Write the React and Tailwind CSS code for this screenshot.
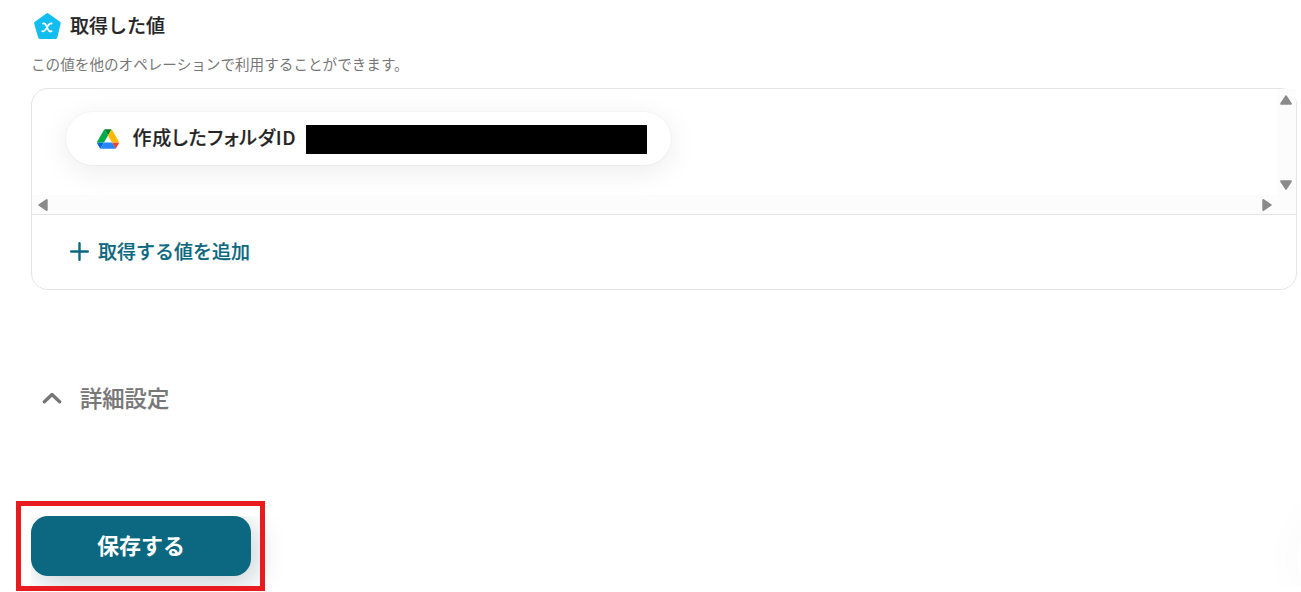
import React from "react";

const DriveIcon = () => (
  <svg className="w-[22px] h-5 shrink-0" viewBox="0 0 87.3 78">
    <path fill="#0066da" d="m6.6 66.85 3.85 6.65c.8 1.4 1.95 2.5 3.3 3.3l13.75-23.8h-27.5c0 1.55.4 3.1 1.2 4.5z" />
    <path fill="#00ac47" d="m43.65 25-13.75-23.8c-1.35.8-2.5 1.9-3.3 3.3l-25.4 44a9.06 9.06 0 0 0 -1.2 4.5h27.5z" />
    <path fill="#ea4335" d="m73.55 76.8c1.35-.8 2.5-1.9 3.3-3.3l1.6-2.75 7.65-13.25c.8-1.4 1.2-2.95 1.2-4.5h-27.502l5.852 11.5z" />
    <path fill="#00832d" d="m43.65 25 13.75-23.8c-1.35-.8-2.9-1.2-4.5-1.2h-18.5c-1.6 0-3.15.45-4.5 1.2z" />
    <path fill="#2684fc" d="m59.8 53h-32.3l-13.75 23.8c1.35.8 2.9 1.2 4.5 1.2h50.8c1.6 0 3.15-.45 4.5-1.2z" />
    <path fill="#ffba00" d="m73.4 26.5-12.7-22c-.8-1.4-1.95-2.5-3.3-3.3l-13.75 23.8 16.15 28h27.45c0-1.55-.4-3.1-1.2-4.5z" />
  </svg>
);

const VariableIcon = () => (
  <svg className="w-7 h-7 shrink-0" viewBox="0 0 28 28" fill="none">
    <path
      d="M14.4 2.9 25.9 11.2 22.6 25.1H6.9L2.9 11.2Z"
      fill="#12bdef"
      stroke="#12bdef"
      strokeWidth="3.6"
      strokeLinejoin="round"
    />
    <path
      d="M10 11.5c1.6-.5 2.3.1 3 1.6l2.2 4.6c.7 1.5 1.8 2.2 3.4 1.5M18.6 11.5c-1.4-.3-2.4.4-3.4 1.9l-2.4 3.9c-1 1.5-2 2.3-3.5 1.9"
      stroke="white"
      strokeWidth="1.8"
      strokeLinecap="round"
    />
  </svg>
);

const Arrow = ({ className }) => (
  <svg className={className} viewBox="0 0 12 10">
    <path
      d="M6 1.3 10.9 8.7H1.1Z"
      fill="#8b8b8b"
      stroke="#8b8b8b"
      strokeWidth="2"
      strokeLinejoin="round"
    />
  </svg>
);

const App = () => {
  return (
    <div className="relative w-full h-[592px] overflow-hidden bg-white pl-[31px] pr-1 font-['Noto_Sans_CJK_JP',sans-serif] text-[#252525]">
      <div className="flex items-center h-[52px] pl-[2px] gap-[9px]">
        <VariableIcon />
        <h2 className="text-[19px] leading-7 pb-[2px] font-medium [-webkit-text-stroke:0.2px]">取得した値</h2>
      </div>
      <p className="h-9 text-[14.6px] leading-6 text-[#777777]">
        この値を他のオペレーションで利用することができます。
      </p>

      <div className="h-[202px] border border-[#e4e4e4] rounded-[17px]">
        <div className="h-[126px] grid grid-cols-[1fr_19px] grid-rows-[1fr_19px] border-b border-[#e4e4e4]">
          <div className="overflow-hidden rounded-tl-2xl pt-[23px] pl-[34px]">
            <div className="flex items-center w-[605px] h-[53px] pl-[30.5px] rounded-full bg-white shadow-[0_6px_30px_rgba(0,0,0,0.08),0_0_2px_rgba(0,0,0,0.08)]">
              <DriveIcon />
              <span className="ml-[14px] w-[173px] pb-[3px] text-[19px] leading-7 font-medium whitespace-nowrap tracking-[0.65px] [font-feature-settings:'palt'] [-webkit-text-stroke:0.2px]">
                作成したフォルダID
              </span>
              <div className="w-[341px] h-[29px] mt-px bg-black"></div>
            </div>
          </div>
          <div className="flex flex-col items-center justify-between bg-[#fcfcfc] pt-[6px] pb-[5px] pr-px">
            <Arrow className="w-3 h-[10px]" />
            <Arrow className="w-3 h-[10px] rotate-180" />
          </div>
          <div className="flex items-center justify-between bg-[#fcfcfc] px-[4.5px]">
            <Arrow className="w-3 h-[10px] -rotate-90" />
            <Arrow className="w-3 h-[10px] rotate-90" />
          </div>
          <div className="bg-[#fcfcfc]"></div>
        </div>
        <button className="flex items-center h-[73px] pl-[38px] gap-[9px] text-[#0b6880]">
          <svg className="w-[19px] h-[19px]" viewBox="0 0 19 19" fill="none">
            <path d="M9.5 1.2v16.6M1.2 9.5h16.6" stroke="currentColor" strokeWidth="2.4" strokeLinecap="round" />
          </svg>
          <span className="text-[19px] leading-7 pb-px font-medium [-webkit-text-stroke:0.2px]">取得する値を追加</span>
        </button>
      </div>

      <button className="flex items-center mt-[90px] h-9 pl-[11px] gap-[18px] text-[#777777]">
        <svg className="w-5 h-3" viewBox="0 0 20 12" fill="none">
          <path d="M2.4 9.8 10 2.6 17.6 9.8" stroke="currentColor" strokeWidth="3.4" strokeLinecap="round" strokeLinejoin="round" />
        </svg>
        <span className="text-[22.3px] leading-9 pb-[2px] font-medium [-webkit-text-stroke:0.2px]">詳細設定</span>
      </button>

      <div className="mt-[100px] h-[70px] w-[270px] overflow-hidden">
        <button className="w-[220px] h-[60px] pb-1 rounded-[17px] bg-[#0b6880] text-white text-[22px] font-bold shadow-[6px_8px_28px_rgba(11,50,65,0.22)]">
          保存する
        </button>
      </div>

      <div className="absolute left-4 top-[501px] w-[249px] h-[90px] border-5 border-[#e81c1f]"></div>
      <div className="absolute right-0 top-[460px] w-10 h-[127px] overflow-hidden">
        <div className="absolute left-[36px] top-[50px] w-24 h-24 rounded-full shadow-[0_0_50px_rgba(0,0,0,0.03)]"></div>
      </div>
    </div>
  );
};

export default App;
